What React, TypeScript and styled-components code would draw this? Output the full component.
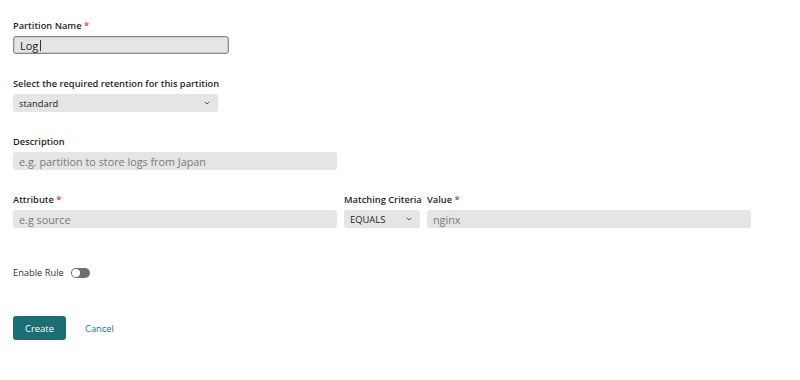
import React from 'react';
import styled, { createGlobalStyle } from 'styled-components';

const GlobalStyle = createGlobalStyle`
  html, body {
    margin: 0;
    padding: 0;
    background: #ffffff;
  }
  body {
    font-family: 'Open Sans', 'Liberation Sans', sans-serif;
    color: #222;
  }
`;

function Chevron() {
  return (
    <svg width="6" height="4" viewBox="0 0 6 4">
      <path d="M0.8 0.8 L3 3 L5.2 0.8" fill="none" stroke="#555" strokeWidth="1" />
    </svg>
  );
}

function App() {
  return (
    <>
      <GlobalStyle />
      <Form>
        <Field>
          <Label>
            Partition Name <Req>*</Req>
          </Label>
          <TextInput $width={216} $focused>
            Log<Caret />
          </TextInput>
        </Field>

        <Field>
          <Label>Select the required retention for this partition</Label>
          <Select $width={205}>
            <span>standard</span>
            <Chevron />
          </Select>
        </Field>

        <Field>
          <Label>Description</Label>
          <TextInput $width={324}>
            <Placeholder>e.g. partition to store logs from Japan</Placeholder>
          </TextInput>
        </Field>

        <Row>
          <Field>
            <Label>
              Attribute <Req>*</Req>
            </Label>
            <TextInput $width={324}>
              <Placeholder>e.g source</Placeholder>
            </TextInput>
          </Field>
          <Field $width={76}>
            <Label>Matching Criteria</Label>
            <Select $width={76}>
              <span>EQUALS</span>
              <Chevron />
            </Select>
          </Field>
          <Field>
            <Label>
              Value <Req>*</Req>
            </Label>
            <TextInput $width={324}>
              <Placeholder>nginx</Placeholder>
            </TextInput>
          </Field>
        </Row>

        <ToggleRow>
          <ToggleLabel>Enable Rule</ToggleLabel>
          <Toggle>
            <Knob />
          </Toggle>
        </ToggleRow>

        <Actions>
          <PrimaryButton>Create</PrimaryButton>
          <LinkButton>Cancel</LinkButton>
        </Actions>
      </Form>
    </>
  );
}

const Form = styled.div`
  display: flex;
  flex-direction: column;
  align-items: flex-start;
  gap: 23px;
  padding: 19px 13px;
`;

const Field = styled.div<{ $width?: number }>`
  display: flex;
  flex-direction: column;
  gap: 3px;
  width: ${(p) => (p.$width ? `${p.$width}px` : 'auto')};
`;

const Row = styled.div`
  display: flex;
  gap: 7px;
`;

const Label = styled.label`
  font-size: 9.3px;
  font-weight: 600;
  line-height: 14px;
  color: #1f1f1f;
  white-space: nowrap;
`;

const Req = styled.span`
  color: #d9302c;
`;

const TextInput = styled.div<{ $width: number; $focused?: boolean }>`
  box-sizing: border-box;
  width: ${(p) => p.$width}px;
  height: 18px;
  display: flex;
  align-items: center;
  padding: 0 6px;
  background: #e4e5e5;
  border-radius: 3px;
  border: ${(p) => (p.$focused ? '1px solid #8a8a8a' : 'none')};
  box-shadow: ${(p) => (p.$focused ? 'inset 0 0 0 0.5px #b0b0b0' : 'none')};
  font-size: 11px;
  color: #222;
`;

const Caret = styled.span`
  display: inline-block;
  width: 1px;
  height: 11px;
  margin-left: 2px;
  background: #333;
`;

const Placeholder = styled.span`
  color: #7a7a7a;
  font-size: 10.8px;
`;

const Select = styled.div<{ $width: number }>`
  box-sizing: border-box;
  width: ${(p) => p.$width}px;
  height: 18px;
  display: flex;
  align-items: center;
  justify-content: space-between;
  padding: 0 8px 0 6px;
  background: #e4e5e5;
  border-radius: 3px;
  font-size: 9.4px;
  color: #222;
`;

const ToggleRow = styled.div`
  display: flex;
  align-items: center;
  gap: 7px;
  margin-top: 15px;
`;

const ToggleLabel = styled.span`
  font-size: 9.3px;
  color: #333;
`;

const Toggle = styled.div`
  box-sizing: border-box;
  width: 19px;
  height: 10px;
  border-radius: 5px;
  background: #6f6f6f;
  display: flex;
  align-items: center;
  padding: 0 1px;
`;

const Knob = styled.div`
  width: 8px;
  height: 8px;
  border-radius: 50%;
  background: #ffffff;
`;

const Actions = styled.div`
  display: flex;
  align-items: center;
  gap: 19px;
  margin-top: 14px;
`;

const PrimaryButton = styled.button`
  width: 53px;
  height: 24px;
  border: none;
  border-radius: 3px;
  background: #1b6e74;
  color: #ffffff;
  font-family: 'Open Sans', 'Liberation Sans', sans-serif;
  font-size: 9.4px;
  cursor: pointer;
`;

const LinkButton = styled.button`
  border: none;
  background: none;
  padding: 0;
  color: #167880;
  font-family: 'Open Sans', 'Liberation Sans', sans-serif;
  font-size: 9.4px;
  cursor: pointer;
`;

export default App;
